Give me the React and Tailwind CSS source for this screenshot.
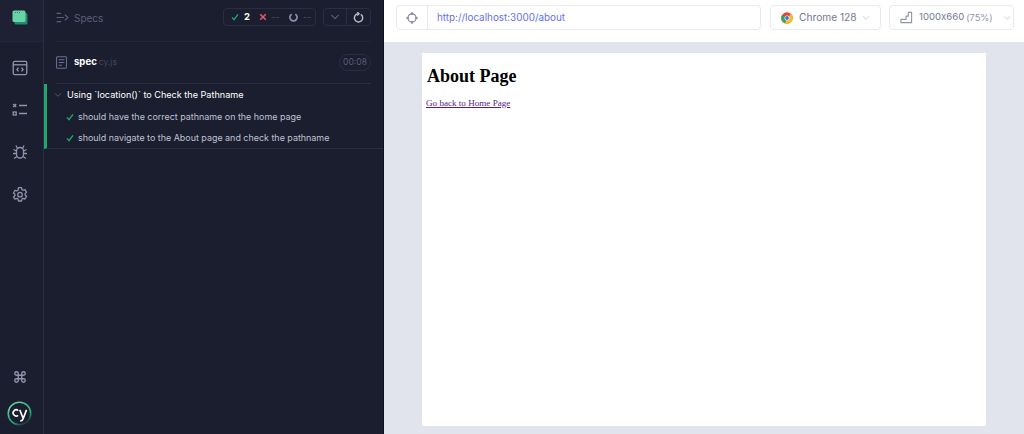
import React from "react";

const Check = ({ className }) => (
  <svg viewBox="0 0 12 12" className={className} fill="none" stroke="currentColor" strokeWidth="2">
    <path d="M1.5 6.5 4.5 10 10.5 2" />
  </svg>
);

const Chevron = ({ className }) => (
  <svg viewBox="0 0 12 12" className={className} fill="none" stroke="currentColor" strokeWidth="1.3">
    <path d="M1.5 3.5 6 8l4.5-4.5" />
  </svg>
);

function Nav() {
  return (
    <div className="w-[44px] shrink-0 flex flex-col border-r border-[#2a2e42] bg-[#1b1e2e] text-[#9095ad]">
      <div className="h-[42px] pt-[10px] pl-[12px] border-b border-[#232638] bg-[#1e2133]">
        <svg viewBox="0 0 16 15" className="w-[16px] h-[15px]">
          <rect x="2.5" y="3" width="13" height="11.5" rx="1.5" fill="#1f8a70" />
          <rect x="0.5" y="0.5" width="13" height="11.5" rx="1.5" fill="#69d3a7" />
          <path d="M3 2.5h1M5 2.5h1M7 2.5h1" stroke="#1f8a70" strokeWidth="1" />
        </svg>
      </div>
      <div className="flex flex-col items-center pt-[18px] pr-[4px] gap-[26px]">
        <svg viewBox="0 0 16 16" className="w-[16px] h-[16px]" fill="none" stroke="currentColor" strokeWidth="1.3">
          <rect x="1.2" y="1.4" width="13.6" height="13.2" rx="1.5" />
          <path d="M1.2 4.8h13.6" />
          <path d="M6.5 7.6 4.9 9.5l1.6 1.9M9.5 7.6l1.6 1.9-1.6 1.9" strokeWidth="1.3" />
        </svg>
        <svg viewBox="0 0 16 16" className="w-[16px] h-[16px]" fill="none" stroke="currentColor" strokeWidth="1.3">
          <path d="M1.2 2l3 3M4.2 2l-3 3" />
          <rect x="1.2" y="10" width="3" height="3" />
          <path d="M7 3.5h8M7 11.5h8" />
        </svg>
        <svg viewBox="0 0 16 16" className="w-[16px] h-[16px]" fill="none" stroke="currentColor" strokeWidth="1.3">
          <path d="M4.5 7a3.5 3.5 0 0 1 7 0v3.5a3.5 3.5 0 0 1-7 0z" />
          <path d="M5.5 4.5 4 1.5M10.5 4.5 12 1.5M4.5 7 1.5 5.5M11.5 7l3-1.5M4.5 9.5H1M11.5 9.5H15M5 12.5l-3 2M11 12.5l3 2" />
        </svg>
        <svg viewBox="0 0 24 24" className="w-[16px] h-[16px]" fill="none" stroke="currentColor" strokeWidth="1.9" strokeLinejoin="round">
          <path d="M9.67 2.5h4.66l.55 2.9 1.8 1 2.8-.95 2.33 4.05-2.25 1.95v2.1l2.25 1.95-2.33 4.05-2.8-.95-1.8 1-.55 2.9H9.67l-.55-2.9-1.8-1-2.8.95L2.19 16.5l2.25-1.95v-2.1L2.19 10.5l2.33-4.05 2.8.95 1.8-1z" />
          <circle cx="12" cy="13" r="3.4" />
        </svg>
      </div>
      <div className="mt-auto flex flex-col items-center pr-[4px] pb-[8px] gap-[17px]">
        <svg viewBox="0 0 24 24" className="w-[14px] h-[14px]" fill="none" stroke="currentColor" strokeWidth="2.4">
          <path d="M15 6v12a3 3 0 1 0 3-3H6a3 3 0 1 0 3 3V6a3 3 0 1 0-3 3h12a3 3 0 1 0-3-3" />
        </svg>
        <svg viewBox="0 0 26 26" className="w-[25px] h-[25px]" fill="none">
          <defs>
            <linearGradient id="cyg" x1="0.2" y1="0" x2="0.8" y2="1">
              <stop offset="0" stopColor="#69d3a7" />
              <stop offset="0.7" stopColor="#1fa97c" />
              <stop offset="1" stopColor="#1b1e2e" />
            </linearGradient>
          </defs>
          <circle cx="13" cy="13" r="11.7" stroke="url(#cyg)" strokeWidth="1.6" />
          <path d="M11.6 9.9a3.2 3.2 0 1 0 0 5" stroke="#fff" strokeWidth="1.7" />
          <path d="M13.3 9.2l3.2 8.3M20.3 9.2l-3.6 9.4q-.8 2.2-3 2.2" stroke="#fff" strokeWidth="1.7" />
        </svg>
      </div>
    </div>
  );
}

function Reporter() {
  return (
    <div className="w-[340px] shrink-0 flex flex-col bg-[#1b1e2e] border-r border-[#0f111b]">
      <div className="h-[42px] mx-[12px] pb-[7px] flex items-center border-b border-[#232638]">
        <svg viewBox="0 0 14 12" className="mt-[1px] w-[13px] h-[11px] text-[#5a5f7a]" fill="none" stroke="currentColor" strokeWidth="1.2">
          <path d="M.5 1.5h5M.5 6h8M.5 10.5h5M9.5 3 13 6l-3.5 3" />
        </svg>
        <span className="mt-[2px] ml-[5px] text-[10px] text-[#5a5f7a]">Specs</span>
        <div className="ml-auto flex items-center h-[18px] w-[93px] rounded-[4px] border border-[#2a2e42] text-[9.5px]">
          <Check className="ml-[7px] w-[8px] h-[8px] text-[#1fa971]" />
          <span className="ml-[5px] font-bold text-white">2</span>
          <svg viewBox="0 0 10 10" className="ml-[9px] w-[8px] h-[8px] text-[#e45770]" fill="none" stroke="currentColor" strokeWidth="2">
            <path d="M1.5 1.5l7 7M8.5 1.5l-7 7" />
          </svg>
          <span className="ml-[4px] text-[#43475f]">--</span>
          <svg viewBox="0 0 10 10" className="ml-[9px] w-[9px] h-[9px] text-[#8a8fa8]" fill="none" stroke="currentColor" strokeWidth="1.9">
            <path d="M3 1.3a4 4 0 1 0 4 0" />
          </svg>
          <span className="ml-[5px] text-[#43475f]">--</span>
        </div>
        <div className="ml-[7px] flex h-[18px] w-[48px] rounded-[4px] border border-[#2a2e42]">
          <div className="w-[23px] flex items-center justify-center border-r border-[#2a2e42]">
            <Chevron className="w-[10px] h-[10px] text-[#5a5f7a]" />
          </div>
          <div className="flex-1 flex items-center justify-center">
            <svg viewBox="0 0 12 12" className="w-[11px] h-[11px] text-[#b8bbcb]" fill="none" stroke="currentColor" strokeWidth="1.6">
              <path d="M8.5 2.6a4.5 4.5 0 1 1-3-.7" />
              <path d="M4.5 0 6.8 2 4.5 4" strokeWidth="1.3" />
            </svg>
          </div>
        </div>
      </div>
      <div className="h-[42px] mx-[12px] flex items-center border-b border-[#2a2e42]">
        <svg viewBox="0 0 12 14" className="w-[11px] h-[13px] text-[#6b7090]" fill="none" stroke="currentColor" strokeWidth="1.1">
          <rect x="0.6" y="0.6" width="10.8" height="12.8" rx="1" />
          <path d="M3 4h6M3 7h6M3 10h3.5" />
        </svg>
        <span className="ml-[7px] text-[9.6px] font-bold text-white">spec</span>
        <span className="ml-[2px] text-[8.5px] text-[#43475f]">cy.js</span>
        <span className="ml-auto flex items-center justify-center w-[32px] h-[17px] rounded-full border border-[#2a2e42] text-[8.5px] text-[#5a5f7a]">00:08</span>
      </div>
      <div className="border-l-[3px] border-[#1fa971] border-b border-b-[#2a2e42] h-[65px] flex flex-col">
        <div className="h-[22px] flex items-center pl-[7px]">
          <Chevron className="w-[8px] h-[8px] text-[#5a5f7a]" />
          <span className="ml-[5px] text-[9.1px] text-white whitespace-nowrap">Using `location()` to Check the Pathname</span>
        </div>
        <div className="h-[22px] flex items-center pl-[19px]">
          <Check className="w-[8px] h-[8px] text-[#1fa971]" />
          <span className="ml-[4px] text-[8.93px] text-[#bfc2d4] whitespace-nowrap">should have the correct pathname on the home page</span>
        </div>
        <div className="h-[20px] flex items-center pl-[19px]">
          <Check className="w-[8px] h-[8px] text-[#1fa971]" />
          <span className="ml-[4px] text-[8.93px] text-[#bfc2d4] whitespace-nowrap">should navigate to the About page and check the pathname</span>
        </div>
      </div>
    </div>
  );
}

function Toolbar() {
  return (
    <div className="h-[42px] shrink-0 bg-white flex items-center pl-[12px] pr-[10px] pb-[7px] text-[10.2px] [font-feature-settings:'calt'_0]">
      <div className="w-[365px] h-[25px] flex rounded-[4px] border border-[#e8e9f0]">
        <div className="w-[31px] flex items-center justify-center border-r border-[#e8e9f0]">
          <svg viewBox="0 0 14 14" className="w-[12px] h-[12px] text-[#747994]" fill="none" stroke="currentColor" strokeWidth="1.3">
            <circle cx="7" cy="7" r="4.8" />
            <path d="M7 0v3.5M7 10.5V14M0 7h3.5M10.5 7H14" />
          </svg>
        </div>
        <span className="ml-[9px] self-center text-[9.9px] text-[#6470f3]">http://localhost:3000/about</span>
      </div>
      <div className="ml-[9px] w-[111px] h-[25px] flex items-center rounded-[4px] border border-[#e8e9f0] text-[#747994]">
        <svg viewBox="0 0 24 24" className="ml-[10px] w-[12px] h-[12px] shrink-0">
          <circle cx="12" cy="12" r="11.5" fill="#e0443a" />
          <path d="M12 12 1.8 6.5A11.5 11.5 0 0 0 8 23z" fill="#3aa757" />
          <path d="M12 12 8 23A11.5 11.5 0 0 0 23.5 12 11.5 11.5 0 0 0 20 4z" fill="#f5bf2a" />
          <circle cx="12" cy="12" r="5" fill="#fff" />
          <circle cx="12" cy="12" r="3.8" fill="#2f74e8" />
        </svg>
        <span className="ml-[6px]">Chrome 128</span>
        <Chevron className="ml-[5px] w-[8px] h-[8px] text-[#c4c6d4]" />
      </div>
      <div className="ml-[8px] w-[125px] h-[25px] flex items-center rounded-[4px] border border-[#e8e9f0] text-[#747994]">
        <svg viewBox="0 0 14 14" className="ml-[10px] w-[13px] h-[13px] shrink-0 text-[#9095ad]" fill="none" stroke="currentColor" strokeWidth="1.2">
          <path d="M1 12.5V9h5.5V5.5H9V1.5h3.5v11z" />
        </svg>
        <span className="ml-[6px] text-[9.6px] whitespace-nowrap">1000x660</span>
        <span className="ml-[2px] text-[9.2px] whitespace-nowrap text-[#9095ad]">(75%)</span>
        <Chevron className="ml-[10px] w-[8px] h-[8px] text-[#c4c6d4]" />
      </div>
    </div>
  );
}

export default function App() {
  return (
    <div className="h-[434px] w-[1024px] flex overflow-hidden font-['Inter','Liberation_Sans',sans-serif]">
      <Nav />
      <Reporter />
      <div className="flex-1 flex flex-col bg-[#e1e3ed]">
        <Toolbar />
        <div className="flex-1 pt-[11px] pb-[8px] pl-[38px] pr-[38px]">
          <div className="h-full bg-white px-[5px] font-['Liberation_Serif',serif] text-black">
            <h1 className="pt-[13px] text-[18px] font-bold leading-[21px]">About Page</h1>
            <a className="block mt-[11px] -ml-[1px] text-[9.1px] leading-[11px] underline text-[#551a8b]" href="#">Go back to Home Page</a>
          </div>
        </div>
      </div>
    </div>
  );
}
